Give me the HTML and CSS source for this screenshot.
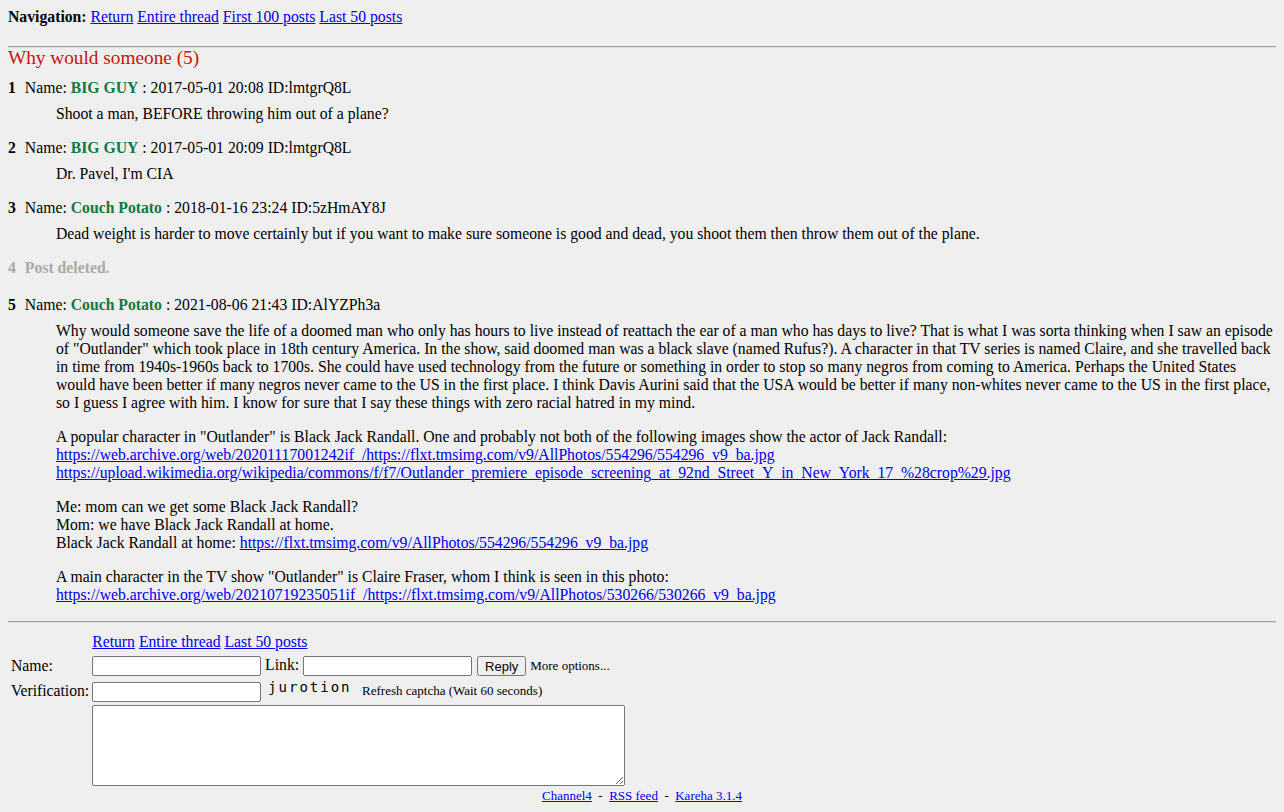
FILE: index.html
```html
<!DOCTYPE html>
<html lang="en">

<head>
    <meta charset="UTF-8">
    <meta name="viewport" content="width=device-width, initial-scale=1.0">
    <link rel="stylesheet" href="styles.css">
    <title>Why would someone</title>
</head>

<body>

    <div id="navigation">
        <strong>Navigation:</strong>
        <a href="#">Return</a>
        <a href="#">Entire thread</a>
        <a href="#">First 100 posts</a>
        <a href="#">Last 50 posts</a>
    </div>

    <hr>

    <div id="posts">

        <h2>Why would someone <small>(5)</small></h2>

        <div class="reply">
            <h3><span class="replynum">1</span>Name: <span class="postername">BIG GUY</span> : 2017-05-01 20:08 ID:lmtgrQ8L</h3>
            <div class="replytext">
                <p>Shoot a man, BEFORE throwing him out of a plane?</p>
            </div>
        </div>

        <div class="reply">
            <h3><span class="replynum">2</span>Name: <span class="postername">BIG GUY</span> : 2017-05-01 20:09 ID:lmtgrQ8L</h3>
            <div class="replytext">
                <p>Dr. Pavel, I'm CIA</p>
            </div>
        </div>

        <div class="reply">
            <h3><span class="replynum">3</span>Name: <span class="postername">Couch Potato</span> : 2018-01-16 23:24 ID:5zHmAY8J</h3>
            <div class="replytext">
                <p>Dead weight is harder to move certainly but if you want to make sure someone is good and dead, you shoot them then throw them out of the plane.</p>
            </div>
        </div>

        <div class="reply deletedpost">
            <h3><span class="replynum">4</span>Post deleted.</h3>
        </div>

        <div class="reply">
            <h3><span class="replynum">5</span>Name: <span class="postername">Couch Potato</span> : 2021-08-06 21:43 ID:AlYZPh3a</h3>
            <div class="replytext">
                <p>Why would someone save the life of a doomed man who only has hours to live instead of reattach the ear of a man who has days to live? That is what I was sorta thinking when I saw an episode of "Outlander" which took place in 18th century America. In the show, said doomed man was a black slave (named Rufus?). A character in that TV series is named Claire, and she travelled back in time from 1940s-1960s back to 1700s. She could have used technology from the future or something in order to stop so many negros from coming to America. Perhaps the United States would have been better if many negros never came to the US in the first place. I think Davis Aurini said that the USA would be better if many non-whites never came to the US in the first place, so I guess I agree with him. I know for sure that I say these things with zero racial hatred in my mind.</p>
                <p>A popular character in "Outlander" is Black Jack Randall. One and probably not both of the following images show the actor of Jack Randall:<br>
                    <a href="#">https://web.archive.org/web/20201117001242if_/https://flxt.tmsimg.com/v9/AllPhotos/554296/554296_v9_ba.jpg</a><br>
                    <a href="#">https://upload.wikimedia.org/wikipedia/commons/f/f7/Outlander_premiere_episode_screening_at_92nd_Street_Y_in_New_York_17_%28crop%29.jpg</a></p>
                <p>Me: mom can we get some Black Jack Randall?<br>
                    Mom: we have Black Jack Randall at home.<br>
                    Black Jack Randall at home: <a href="#">https://flxt.tmsimg.com/v9/AllPhotos/554296/554296_v9_ba.jpg</a></p>
                <p>A main character in the TV show "Outlander" is Claire Fraser, whom I think is seen in this photo:<br>
                    <a href="#">https://web.archive.org/web/20210719235051if_/https://flxt.tmsimg.com/v9/AllPhotos/530266/530266_v9_ba.jpg</a></p>
            </div>
        </div>

    </div>

    <hr>

    <form class="postform">
        <table>
            <tbody>
                <tr class="linksrow">
                    <td></td>
                    <td>
                        <a href="#">Return</a>
                        <a href="#">Entire thread</a>
                        <a href="#">Last 50 posts</a>
                    </td>
                </tr>
                <tr>
                    <td class="label">Name:</td>
                    <td>
                        <input type="text" class="field">
                        Link: <input type="text" class="field">
                        <input type="submit" value="Reply" class="button">
                        <small>More options...</small>
                    </td>
                </tr>
                <tr>
                    <td class="label">Verification:</td>
                    <td>
                        <input type="text" class="field">
                        <span class="captcha">jurotion</span>
                        <small>Refresh captcha (Wait 60 seconds)</small>
                    </td>
                </tr>
                <tr>
                    <td></td>
                    <td><textarea class="comment"></textarea></td>
                </tr>
            </tbody>
        </table>
    </form>

    <div id="footer">
        <a href="#">Channel4</a> &nbsp;-&nbsp;
        <a href="#">RSS feed</a> &nbsp;-&nbsp;
        <a href="#">Kareha 3.1.4</a>
    </div>

</body>

</html>
```

FILE: styles.css
```css
body {
    margin: 8px;
    background-color: #efefef;
    color: #000;
    font-family: "Liberation Serif", "Times New Roman", serif;
    font-size: 15.73px;
    line-height: 18px;
}

a {
    color: #0000ee;
}

hr {
    border: 0;
    border-top: 1px solid #a0a0a0;
    border-bottom: 1px solid #e0e0e0;
    margin: 0;
}

#navigation {
    margin-bottom: 20px;
}

h2 {
    margin: 0 0 11px 0;
    font-size: 19.3px;
    line-height: 20px;
    font-weight: normal;
    color: #cc1105;
}

h2 small {
    font-size: 19.3px;
}

h3 {
    margin: 0 0 8px 0;
    font-size: 15.73px;
    font-weight: normal;
}

.replynum {
    font-weight: bold;
    margin-right: 9px;
}

.postername {
    font-weight: bold;
    color: #117743;
}

.replytext {
    margin-left: 48px;
}

.replytext p {
    margin: 0 0 16px 0;
}

.deletedpost h3 {
    color: #aaaaaa;
    font-weight: bold;
    margin-bottom: 19px;
}

#posts {
    padding-bottom: 1px;
}

.postform {
    margin: 9px 0 0 0;
}

.postform table {
    border-spacing: 2px;
    margin-top: -2px;
}

.postform td {
    padding: 1px;
    vertical-align: middle;
}

.postform td.label {
    padding-right: 0;
    letter-spacing: -0.03px;
}

.linksrow td {
    padding-bottom: 2px;
}

.field {
    width: 169px;
    height: 20px;
    box-sizing: border-box;
    margin: 0;
    vertical-align: middle;
}

.button {
    height: 20px;
    margin: 0 0 0 1px;
    padding: 0 6px;
    font-family: "Liberation Sans", Arial, sans-serif;
    font-size: 13px;
    vertical-align: middle;
}

small {
    font-size: 13px;
}

.captcha {
    display: inline-block;
    width: 90px;
    margin-left: 3px;
    font-family: "DejaVu Sans Mono", monospace;
    font-size: 14px;
    letter-spacing: 2px;
    line-height: 14px;
    vertical-align: 3px;
}

.comment {
    width: 533px;
    height: 81px;
    box-sizing: border-box;
    margin: -1px 0 0 0;
    display: block;
}

#footer {
    text-align: center;
    font-size: 13px;
    margin-top: -2px;
}
```
